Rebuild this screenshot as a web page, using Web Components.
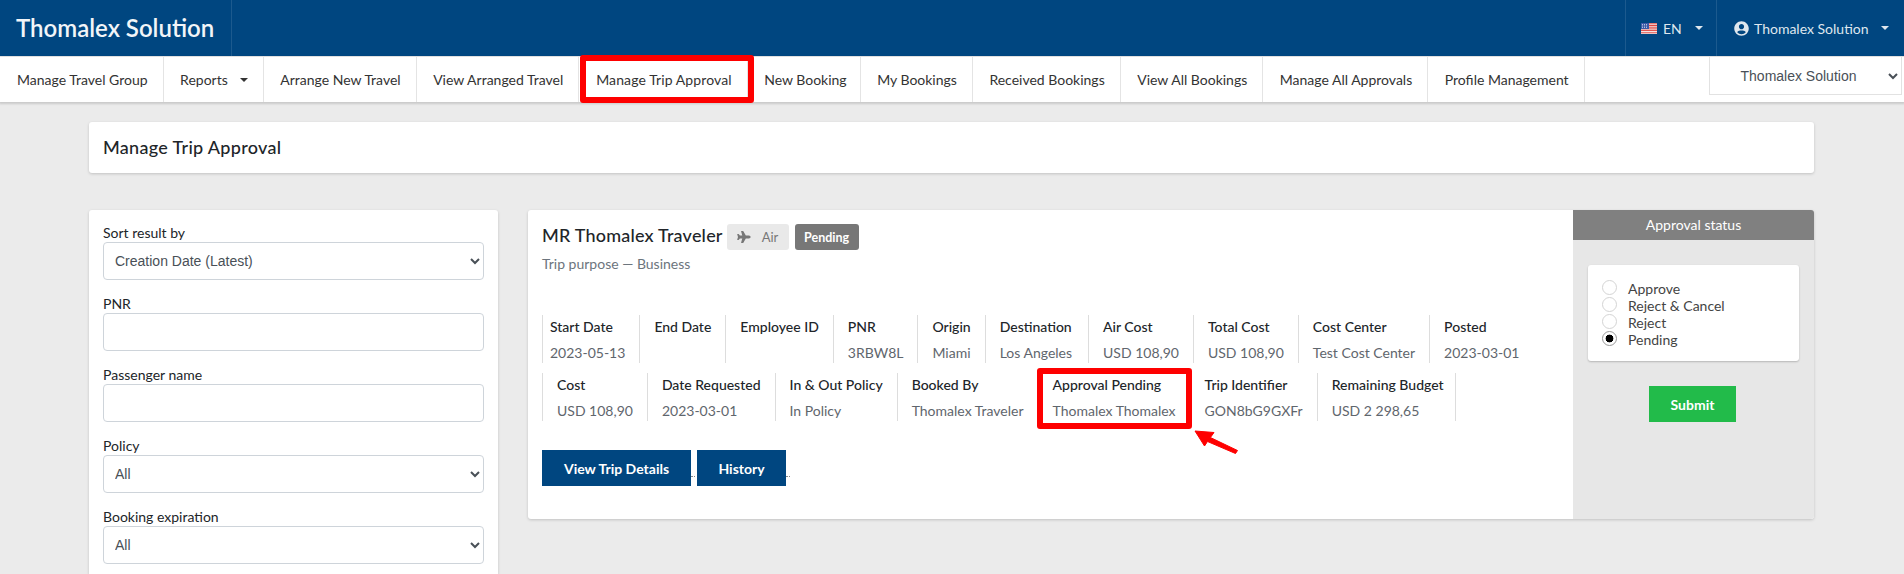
<!DOCTYPE html>
<html lang="en">
<head>
<meta charset="utf-8">
<title>Manage Trip Approval</title>
<style>
    html, body { margin: 0; height: 574px; overflow: hidden; }
    body { background: #ebebeb; font-family: Lato, "Liberation Sans", sans-serif; font-size: 14px; color: #212529; position: relative; }
</style>
</head>
<body>

<app-topbar brand="Thomalex Solution" user="Thomalex Solution"></app-topbar>

<app-nav account="Thomalex Solution">
    <nav-item>Manage Travel Group</nav-item>
    <nav-item caret>Reports</nav-item>
    <nav-item>Arrange New Travel</nav-item>
    <nav-item>View Arranged Travel</nav-item>
    <nav-item style="padding-left:17px;letter-spacing:.1px">Manage Trip Approval</nav-item>
    <nav-item style="padding-right:13px">New Booking</nav-item>
    <nav-item>My Bookings</nav-item>
    <nav-item>Received Bookings</nav-item>
    <nav-item>View All Bookings</nav-item>
    <nav-item>Manage All Approvals</nav-item>
    <nav-item>Profile Management</nav-item>
</app-nav>

<page-content>
    <page-title slot="title">Manage Trip Approval</page-title>

    <filter-panel slot="filters">
        <filter-field label="Sort result by" type="select" value="Creation Date (Latest)"></filter-field>
        <filter-field label="PNR"></filter-field>
        <filter-field label="Passenger name"></filter-field>
        <filter-field label="Policy" type="select" value="All"></filter-field>
        <filter-field label="Booking expiration" type="select" value="All"></filter-field>
    </filter-panel>

    <trip-card slot="trip" traveler="MR Thomalex Traveler" purpose="Trip purpose — Business">
        <info-row slot="rows">
            <info-cell label="Start Date" first>2023-05-13</info-cell>
            <info-cell label="End Date"></info-cell>
            <info-cell label="Employee ID"></info-cell>
            <info-cell label="PNR">3RBW8L</info-cell>
            <info-cell label="Origin">Miami</info-cell>
            <info-cell label="Destination" style="padding-right:16px">Los Angeles</info-cell>
            <info-cell label="Air Cost">USD 108,90</info-cell>
            <info-cell label="Total Cost">USD 108,90</info-cell>
            <info-cell label="Cost Center">Test Cost Center</info-cell>
            <info-cell label="Posted" plain>2023-03-01</info-cell>
        </info-row>
        <info-row slot="rows">
            <info-cell label="Cost">USD 108,90</info-cell>
            <info-cell label="Date Requested">2023-03-01</info-cell>
            <info-cell label="In &amp; Out Policy">In Policy</info-cell>
            <info-cell label="Booked By">Thomalex Traveler</info-cell>
            <info-cell label="Approval Pending">Thomalex Thomalex</info-cell>
            <info-cell label="Trip Identifier">GON8bG9GXFr</info-cell>
            <info-cell label="Remaining Budget" style="padding-right:11px">USD 2 298,65</info-cell>
        </info-row>
    </trip-card>

    <approval-panel slot="approval" selected="Pending"></approval-panel>
</page-content>

<red-mark x="580" y="55" w="174" h="48"></red-mark>
<red-mark x="1037" y="368" w="155" h="61"></red-mark>
<red-arrow></red-arrow>

<script>
const CARET = `<svg width="8" height="4" viewBox="0 0 8 4" style="display:block"><path d="M0 0h8L4 4z" fill="currentColor"/></svg>`;

class AppTopbar extends HTMLElement {
    connectedCallback() {
        this.attachShadow({ mode: 'open' });
        this.shadowRoot.innerHTML = `
            <style>
                :host { display: flex; height: 56px; background: #004680; color: #dfe7ee; font-size: 14px; }
                .brand { width: 215px; padding-left: 16px; border-right: 1px solid #1c5a8e; color: #f2f5f8; font-size: 24px; font-weight: 600; line-height: 56px; white-space: nowrap; }
                .space { flex: 1; }
                .item { display: flex; align-items: center; border-left: 1px solid #1c5a8e; box-sizing: border-box; }
                .lang { width: 91px; padding-left: 15px; }
                .user { width: 188px; padding-left: 17px; }
                .lang span { margin: 0 13px 0 6px; }
                .user span { margin: 0 12px 0 5px; }
                svg { flex: none; }
            </style>
            <div class="brand">${this.getAttribute('brand')}</div>
            <div class="space"></div>
            <div class="item lang">
                <svg width="16" height="11" viewBox="0 0 16 11">
                    <rect width="16" height="11" fill="#f4f4f4"/>
                    <path d="M0 .8h16M0 2.5h16M0 4.2h16M0 5.9h16M0 7.6h16M0 9.8h16" stroke="#e0453f" stroke-width="1"/>
                    <rect width="8" height="6" fill="#3c5aa8"/>
                    <path d="M1 1.5h6M1 3h6M1 4.5h6" stroke="#e6ebf5" stroke-width=".7" stroke-dasharray="1 1"/>
                </svg>
                <span>EN</span>${CARET}
            </div>
            <div class="item user">
                <svg width="15" height="15" viewBox="0 0 496 512"><path fill="currentColor" d="M248 8C111 8 0 119 0 256s111 248 248 248 248-111 248-248S385 8 248 8zm0 96c48.6 0 88 39.4 88 88s-39.4 88-88 88-88-39.4-88-88 39.4-88 88-88zm0 344c-58.7 0-111.3-26.6-146.5-68.2 18.8-35.4 55.6-59.8 98.5-59.8 2.4 0 4.8.4 7.1 1.1 13 4.2 26.6 6.9 40.9 6.9 14.3 0 28-2.7 40.9-6.9 2.3-.7 4.7-1.1 7.1-1.1 42.9 0 79.7 24.4 98.5 59.8C359.3 421.4 306.7 448 248 448z"/></svg>
                <span>${this.getAttribute('user')}</span>${CARET}
            </div>`;
    }
}

class AppNav extends HTMLElement {
    connectedCallback() {
        this.attachShadow({ mode: 'open' });
        this.shadowRoot.innerHTML = `
            <style>
                :host { display: flex; justify-content: space-between; align-items: flex-start; height: 45px; margin-top: 1px; background: #fff; box-shadow: 0 1px 2px 1px rgba(0,0,0,.14); }
                .items { display: flex; height: 45px; }
                select { width: 193px; height: 38px; margin-right: 2px; padding: 0 24px 0 22px; border: 1px solid #e2e2e2; border-top: 0; background: #fff; color: #495057; font: 14px "Liberation Sans", Arial, sans-serif; text-align: center; box-sizing: border-box; }
            </style>
            <div class="items"><slot></slot></div>
            <select><option>${this.getAttribute('account')}</option></select>`;
    }
}

class NavItem extends HTMLElement {
    connectedCallback() {
        this.attachShadow({ mode: 'open' });
        this.shadowRoot.innerHTML = `
            <style>
                :host { display: flex; align-items: center; gap: 12px; padding: 0 15px 0 16.5px; border-right: 1px solid #e4e4e4; color: #333; font-size: 14px; white-space: nowrap; }
                :host(:first-child) { padding-left: 17px; }
                svg { color: #333; }
            </style>
            <slot></slot>${this.hasAttribute('caret') ? CARET : ''}`;
    }
}

class PageContent extends HTMLElement {
    connectedCallback() {
        this.attachShadow({ mode: 'open' });
        this.shadowRoot.innerHTML = `
            <style>
                :host { display: block; margin: 20px 90px 0 89px; }
                .cols { display: flex; gap: 30px; margin-top: 37px; align-items: flex-start; }
                .trip { display: flex; flex: 1; height: 309px; background: #fff; border-radius: 3px; box-shadow: 0 1px 3px rgba(0,0,0,.18); overflow: hidden; }
            </style>
            <slot name="title"></slot>
            <div class="cols">
                <slot name="filters"></slot>
                <div class="trip">
                    <slot name="trip"></slot>
                    <slot name="approval"></slot>
                </div>
            </div>`;
    }
}

class PageTitle extends HTMLElement {
    connectedCallback() {
        this.attachShadow({ mode: 'open' });
        this.shadowRoot.innerHTML = `
            <style>
                :host { display: block; height: 51px; padding-left: 14px; background: #fff; border-radius: 3px; box-shadow: 0 1px 3px rgba(0,0,0,.18); color: #212529; font-size: 18px; font-weight: 500; letter-spacing: .3px; line-height: 51px; }
            </style>
            <slot></slot>`;
    }
}

class FilterPanel extends HTMLElement {
    connectedCallback() {
        this.attachShadow({ mode: 'open' });
        this.shadowRoot.innerHTML = `
            <style>
                :host { display: block; flex: none; width: 409px; height: 364px; padding: 11px 14px 0; box-sizing: border-box; background: #fff; border-radius: 3px 3px 0 0; box-shadow: 0 1px 3px rgba(0,0,0,.18); overflow: hidden; }
            </style>
            <slot></slot>`;
    }
}

class FilterField extends HTMLElement {
    connectedCallback() {
        this.attachShadow({ mode: 'open' });
        const control = this.getAttribute('type') === 'select'
            ? `<select><option>${this.getAttribute('value')}</option></select>`
            : `<input type="text">`;
        this.shadowRoot.innerHTML = `
            <style>
                :host { display: block; margin-bottom: 12px; }
                label { display: block; height: 21px; color: #212529; font-size: 14px; line-height: 23px; }
                select, input { display: block; width: 381px; height: 38px; padding: 0 12px; border: 1px solid #ced4da; border-radius: 4px; background: #fff; color: #495057; font: 14px "Liberation Sans", Arial, sans-serif; box-sizing: border-box; }
                select { padding-left: 7px; }
            </style>
            <label>${this.getAttribute('label')}</label>${control}`;
    }
}

class TripCard extends HTMLElement {
    connectedCallback() {
        this.attachShadow({ mode: 'open' });
        this.shadowRoot.innerHTML = `
            <style>
                :host { display: block; width: 1045px; flex: none; padding: 14px 14px 0; box-sizing: border-box; }
                .head { display: flex; align-items: center; height: 26px; }
                h2 { margin: -4px 4px 0 0; color: #212529; font-size: 18px; font-weight: 500; letter-spacing: .2px; line-height: 22px; white-space: nowrap; }
                .badge { display: flex; align-items: center; height: 26px; border-radius: 3px; box-sizing: border-box; }
                .air { width: 62px; padding-left: 10px; gap: 11px; background: #e9e9e9; color: #777; font-size: 13px; }
                .pending { justify-content: center; width: 64px; margin-left: 6px; background: #777; color: #fff; font-size: 12.5px; font-weight: 700; }
                .purpose { margin: 3px 0 0; color: #6c757d; font-size: 14px; line-height: 22px; }
                .rows { margin-top: 40px; }
                .buttons { display: flex; gap: 6px; margin-top: 29px; position: relative; }
                button { height: 36px; padding: 0; border: 0; background: #004680; color: #fff; font: 700 14px Lato, sans-serif; }
                .view { width: 149px; }
                .hist { width: 89px; }
                .dots { position: absolute; top: 26px; height: 1px; width: 4px; border-top: 1px dotted #888; }
            </style>
            <div class="head">
                <h2>${this.getAttribute('traveler')}</h2>
                <span class="badge air">
                    <svg width="14" height="12" viewBox="0 0 576 512"><path fill="currentColor" d="M480 192H365.71L260.61 8.06A16.014 16.014 0 0 0 246.71 0h-65.5c-10.63 0-18.3 10.17-15.38 20.39L214.86 192H112l-43.2-57.6c-3.02-4.03-7.77-6.4-12.8-6.4H16.01C5.6 128-2.04 137.78.49 147.88L32 256 .49 364.12C-2.04 374.22 5.6 384 16.01 384H56c5.04 0 9.78-2.37 12.8-6.4L112 320h102.86l-49.03 171.6c-2.92 10.22 4.75 20.4 15.38 20.4h65.5c5.74 0 11.04-3.08 13.89-8.06L365.71 320H480c35.35 0 96-28.65 96-64s-60.65-64-96-64z"/></svg>
                    Air
                </span>
                <span class="badge pending">Pending</span>
            </div>
            <p class="purpose">${this.getAttribute('purpose')}</p>
            <div class="rows"><slot name="rows"></slot></div>
            <div class="buttons">
                <button class="view">View Trip Details</button>
                <button class="hist">History</button>
                <i class="dots" style="left:149px"></i>
                <i class="dots" style="left:244px"></i>
            </div>`;
    }
}

class InfoRow extends HTMLElement {
    connectedCallback() {
        this.attachShadow({ mode: 'open' });
        this.shadowRoot.innerHTML = `
            <style>
                :host { display: flex; height: 48px; margin-bottom: 10px; border-left: 1px solid #ddd; }
            </style>
            <slot></slot>`;
    }
}

class InfoCell extends HTMLElement {
    connectedCallback() {
        this.attachShadow({ mode: 'open' });
        this.shadowRoot.innerHTML = `
            <style>
                :host { display: block; padding: 0 14px; border-right: 1px solid #ddd; font-size: 14px; white-space: nowrap; }
                :host([first]) { padding-left: 7px; }
                :host([plain]) { border-right: 0; }
                .label { padding-top: 1px; color: #212529; font-weight: 500; line-height: 22px; }
                .value { margin-top: 4px; color: #5f666d; line-height: 22px; min-height: 21px; }
            </style>
            <div class="label">${this.getAttribute('label')}</div>
            <div class="value"><slot></slot></div>`;
    }
}

class ApprovalPanel extends HTMLElement {
    connectedCallback() {
        this.attachShadow({ mode: 'open' });
        const selected = this.getAttribute('selected');
        const options = ['Approve', 'Reject & Cancel', 'Reject', 'Pending'].map(name => `
            <label>
                <input type="radio" name="status" ${name === selected ? 'checked' : ''}>
                <span>${name.replace('&', '&amp;')}</span>
            </label>`).join('');
        this.shadowRoot.innerHTML = `
            <style>
                :host { display: block; flex: 1; background: #e7e7e7; }
                h3 { margin: 0; height: 30px; background: #808080; color: #fff; font-size: 14px; font-weight: 400; line-height: 30px; text-align: center; }
                .box { margin: 25px 15px 0; padding: 14px 14px 0; height: 96px; box-sizing: border-box; background: #fff; border-radius: 3px; box-shadow: 0 1px 2px rgba(0,0,0,.22); }
                label { display: flex; align-items: center; height: 17px; color: #444; font-size: 14px; }
                label span { margin-top: 2px; }
                input { appearance: none; flex: none; width: 15px; height: 15px; margin: 0 11px 0 0; border: 1px solid #d4d4d4; border-radius: 50%; background: #fff; box-sizing: border-box; }
                input:checked { border-color: #999; background: radial-gradient(circle, #000 0 3.6px, #fff 4.2px); }
                .act { display: flex; justify-content: center; margin: 25px 0 0 -2px; }
                button { width: 87px; height: 36px; padding: 0; border: 0; background: #22bb4a; color: #fff; font: 700 14px Lato, sans-serif; }
            </style>
            <h3>Approval status</h3>
            <div class="box">${options}</div>
            <div class="act"><button>Submit</button></div>`;
    }
}

// screenshot annotations lying over the page
class RedMark extends HTMLElement {
    connectedCallback() {
        this.attachShadow({ mode: 'open' });
        const a = n => this.getAttribute(n) + 'px';
        this.shadowRoot.innerHTML = `
            <style>
                :host { position: absolute; left: ${a('x')}; top: ${a('y')}; width: ${a('w')}; height: ${a('h')}; border: 6.5px solid #fe0000; border-radius: 3px; box-sizing: border-box; }
            </style>`;
    }
}

class RedArrow extends HTMLElement {
    connectedCallback() {
        this.attachShadow({ mode: 'open' });
        this.shadowRoot.innerHTML = `
            <style>
                :host { position: absolute; left: 1190px; top: 426px; display: block; width: 55px; height: 32px; }
            </style>
            <svg width="55" height="32" viewBox="0 0 55 32">
                <path d="M5 5L24 6.5 20.4 11.5 47.5 24.5 45.5 27.5 17.5 15.5 14.5 20z" fill="#fe0000" stroke="#fe0000" stroke-width="1" stroke-linejoin="round"/>
            </svg>`;
    }
}

customElements.define('app-topbar', AppTopbar);
customElements.define('app-nav', AppNav);
customElements.define('nav-item', NavItem);
customElements.define('page-content', PageContent);
customElements.define('page-title', PageTitle);
customElements.define('filter-panel', FilterPanel);
customElements.define('filter-field', FilterField);
customElements.define('trip-card', TripCard);
customElements.define('info-row', InfoRow);
customElements.define('info-cell', InfoCell);
customElements.define('approval-panel', ApprovalPanel);
customElements.define('red-mark', RedMark);
customElements.define('red-arrow', RedArrow);
</script>
</body>
</html>
